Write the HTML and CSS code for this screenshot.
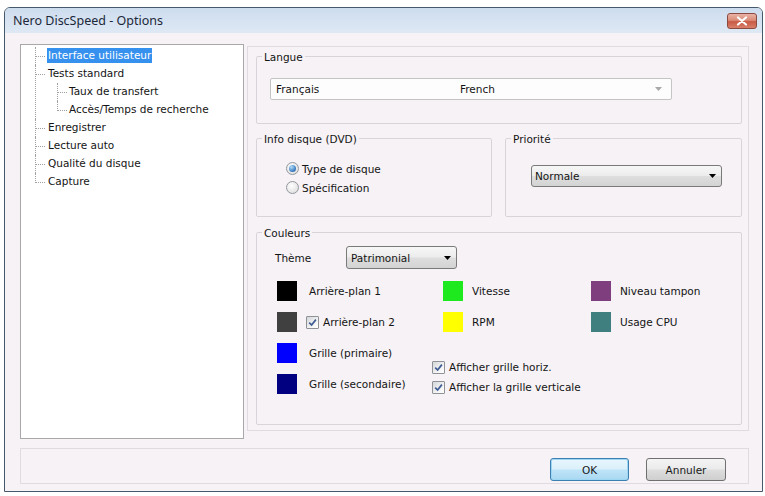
FILE: index.html
```html
<!DOCTYPE html>
<html lang="fr">
<head>
<meta charset="utf-8">
<title>Nero DiscSpeed - Options</title>
<link rel="stylesheet" href="styles.css">
</head>
<body>
<div class="window">
  <div class="titlebar">
    <span class="title">Nero DiscSpeed - Options</span>
    <span class="close"><svg width="12" height="10" viewBox="0 0 12 10"><path d="M2 1.5L10 8.5M10 1.5L2 8.5" stroke="#fff" stroke-width="2.2" stroke-linecap="round"/></svg></span>
  </div>
  <div class="content">
    <div class="main">
      <div class="tree">
        <ul class="tree-root">
          <li><span class="sel">Interface utilisateur</span></li>
          <li><span>Tests standard</span>
            <ul class="tree-sub">
              <li><span>Taux de transfert</span></li>
              <li><span>Accès/Temps de recherche</span></li>
            </ul>
          </li>
          <li><span>Enregistrer</span></li>
          <li><span>Lecture auto</span></li>
          <li><span>Qualité du disque</span></li>
          <li><span>Capture</span></li>
        </ul>
      </div>
      <div class="panel">
        <fieldset class="group lang">
          <legend>Langue</legend>
          <div class="combo-edit">
            <span class="lang-name">Français</span>
            <span>French</span>
            <svg class="arrow-grey" width="7" height="4" viewBox="0 0 7 4"><path d="M0 0h7L3.5 4z" fill="#a8a8a8"/></svg>
          </div>
        </fieldset>
        <div class="row">
          <fieldset class="group info">
            <legend>Info disque (DVD)</legend>
            <div class="opt"><span class="radio on"><span class="dot"></span></span><span>Type de disque</span></div>
            <div class="opt"><span class="radio"></span><span>Spécification</span></div>
          </fieldset>
          <fieldset class="group prio">
            <legend>Priorité</legend>
            <div class="dd dd-prio"><span>Normale</span><svg width="7" height="4" viewBox="0 0 7 4"><path d="M0 0h7L3.5 4z" fill="#000"/></svg></div>
          </fieldset>
        </div>
        <fieldset class="group colors">
          <legend>Couleurs</legend>
          <div class="theme-row">
            <span class="theme-label">Thème</span>
            <div class="dd dd-theme"><span>Patrimonial</span><svg width="7" height="4" viewBox="0 0 7 4"><path d="M0 0h7L3.5 4z" fill="#000"/></svg></div>
          </div>
          <div class="swatches">
            <div class="col col1">
              <div class="item"><span class="sw" style="background:#000000"></span><span class="lbl">Arrière-plan 1</span></div>
              <div class="item"><span class="sw" style="background:#404040"></span><span class="cb cb-inline"><svg width="9" height="9" viewBox="0 0 9 9"><path d="M1.2 4.6L3.6 7L7.9 1.6" stroke="#3f5c94" stroke-width="1.7" fill="none"/></svg></span><span class="lbl-cb">Arrière-plan 2</span></div>
              <div class="item"><span class="sw" style="background:#0000ff"></span><span class="lbl">Grille (primaire)</span></div>
              <div class="item"><span class="sw" style="background:#000080"></span><span class="lbl">Grille (secondaire)</span></div>
            </div>
            <div class="col col2">
              <div class="item"><span class="sw" style="background:#1ee81e"></span><span class="lbl2">Vitesse</span></div>
              <div class="item"><span class="sw" style="background:#ffff00"></span><span class="lbl2">RPM</span></div>
              <div class="checks">
                <div class="check"><span class="cb"><svg width="9" height="9" viewBox="0 0 9 9"><path d="M1.2 4.6L3.6 7L7.9 1.6" stroke="#3f5c94" stroke-width="1.7" fill="none"/></svg></span><span>Afficher grille horiz.</span></div>
                <div class="check"><span class="cb"><svg width="9" height="9" viewBox="0 0 9 9"><path d="M1.2 4.6L3.6 7L7.9 1.6" stroke="#3f5c94" stroke-width="1.7" fill="none"/></svg></span><span>Afficher la grille verticale</span></div>
              </div>
            </div>
            <div class="col col3">
              <div class="item"><span class="sw" style="background:#7f3f7f"></span><span class="lbl2">Niveau tampon</span></div>
              <div class="item"><span class="sw" style="background:#3f7f7f"></span><span class="lbl2">Usage CPU</span></div>
            </div>
          </div>
        </fieldset>
      </div>
    </div>
    <div class="bottom">
      <button class="btn btn-ok">OK</button>
      <button class="btn">Annuler</button>
    </div>
  </div>
</div>
</body>
</html>
```
FILE: styles.css
```css
* { box-sizing: border-box; }
body {
  margin: 0;
  background: #ffffff;
  font-family: "DejaVu Sans", sans-serif;
  font-size: 10.5px;
  color: #141414;
}
.window {
  margin: 7px 0 0 4px;
  width: 759px;
  height: 485px;
  border: 1px solid #46596b;
  border-radius: 6px 6px 0 0;
  background: #f6f2f6;
  display: flex;
  flex-direction: column;
  overflow: hidden;
}
.titlebar {
  height: 25px;
  flex: none;
  display: flex;
  align-items: center;
  padding-left: 8px;
  background: linear-gradient(#cddcee, #dfe9f5);
}
.title {
  font-family: "Noto Sans", sans-serif;
  font-size: 12.5px;
  color: #1c2838;
}
.close {
  margin-left: auto;
  margin-right: 5px;
  margin-top: 1px;
  width: 30px;
  height: 16px;
  border: 1px solid #8a4a40;
  border-radius: 3px;
  background: linear-gradient(#e9b3a6 0%, #db8b78 45%, #c85a45 55%, #d9806a 100%);
  display: flex;
  align-items: center;
  justify-content: center;
}
.content {
  flex: 1;
  padding: 11px 13px 7px 15px;
  display: flex;
  flex-direction: column;
}
.main {
  display: flex;
  align-items: flex-start;
  height: 395px;
  flex: none;
}
.tree {
  width: 224px;
  height: 395px;
  background: #ffffff;
  border: 1px solid #a9a9a9;
  padding: 2px 0 0 14px;
}
.tree ul { list-style: none; margin: 0; }
.tree-root { padding: 0; }
.tree-sub { padding: 0 0 0 10px; }
.tree li { display: flow-root; position: relative; padding-left: 12px; }
.tree-sub li { padding-left: 11px; }
.tree li::before {
  content: "";
  position: absolute;
  left: 0;
  top: 0;
  width: 9px;
  height: 9px;
  border-left: 1px dotted #a0a0a0;
  border-bottom: 1px dotted #a0a0a0;
}
.tree li:not(:last-child)::after {
  content: "";
  position: absolute;
  left: 0;
  top: 9px;
  bottom: 0;
  border-left: 1px dotted #a0a0a0;
}
.tree li > span {
  display: block;
  width: max-content;
  line-height: 15px;
  margin: 1px 0 2px;
  padding: 0 1px;
}
.tree .sel { background: #3690ee; color: #ffffff; }

.panel {
  margin-left: 3px;
  margin-top: 2px;
  width: 502px;
  height: 385px;
  border: 1px solid #e0dbe0;
  padding: 1px 6px 5px 8px;
  display: flex;
  flex-direction: column;
}
.group {
  border: 1px solid #d9d4d9;
  border-radius: 2px;
  margin: 0;
  padding: 0;
  min-width: 0;
}
.group legend {
  padding: 3px 2px 0;
  margin-left: 5px;
  line-height: 13px;
}
.lang { padding: 14px 0 23px 0; flex: none; }
.combo-edit {
  margin-left: 13px;
  width: 402px;
  height: 22px;
  border: 1px solid #c4c4c4;
  border-radius: 2px;
  background: #fdfdfd;
  display: flex;
  align-items: center;
  padding-left: 5px;
}
.lang-name { width: 184px; }
.arrow-grey { margin-left: auto; margin-right: 9px; }
.row {
  display: flex;
  gap: 13px;
  margin-top: 6px;
  flex: none;
}
.info { width: 236px; padding: 13px 0 19px 0; }
.prio { width: 237px; padding: 19px 0 0 0; }
.opt {
  margin-left: 29px;
  height: 19px;
  display: flex;
  align-items: center;
  gap: 3px;
}
.radio {
  width: 13px;
  height: 13px;
  border-radius: 50%;
  border: 1px solid #92989e;
  background: radial-gradient(circle at 40% 35%, #ffffff 0%, #e4e4e4 70%, #cfcfcf 100%);
  display: flex;
  align-items: center;
  justify-content: center;
}
.dot {
  width: 7px;
  height: 7px;
  border-radius: 50%;
  background: radial-gradient(circle at 35% 30%, #b7dcf7 0%, #4b8ccc 55%, #1f4f8c 100%);
}
.dd {
  height: 22px;
  border: 1px solid #7a7a7a;
  border-radius: 3px;
  background: linear-gradient(#f7f7f7 0%, #ececec 48%, #dedede 52%, #d3d3d3 100%);
  display: flex;
  align-items: center;
  justify-content: space-between;
  padding: 0 5px 0 3px;
}
.dd-prio { width: 191px; margin-left: 25px; }
.dd-theme { width: 111px; height: 23px; padding-left: 4px; }

.colors {
  flex: 1;
  margin-top: 7px;
  padding: 6px 0 0 0;
}
.theme-row {
  display: flex;
  align-items: center;
  padding-left: 18px;
}
.theme-label { width: 71px; }
.swatches {
  display: flex;
  margin-top: 12px;
  padding-left: 20px;
}
.col {
  display: flex;
  flex-direction: column;
  gap: 11px;
}
.col1 { width: 166px; }
.col2 { width: 148px; }
.item {
  height: 20px;
  display: flex;
  align-items: center;
}
.sw { width: 20px; height: 20px; flex: none; }
.lbl { margin-left: 12px; }
.lbl2 { margin-left: 9px; }
.lbl-cb { margin-left: 4px; }
.cb {
  width: 13px;
  height: 13px;
  flex: none;
  border: 1px solid #8e9196;
  border-radius: 1px;
  background: linear-gradient(135deg, #d4d6d9 0%, #f3f3f3 60%, #ffffff 100%);
  display: flex;
  align-items: center;
  justify-content: center;
}
.cb-inline { margin-left: 9px; }
.checks {
  margin-top: 14px;
  margin-left: -11px;
  display: flex;
  flex-direction: column;
}
.check {
  height: 20px;
  display: flex;
  align-items: center;
  gap: 4px;
  white-space: nowrap;
}
.bottom {
  margin-top: 9px;
  height: 36px;
  flex: none;
  border: 1px solid #e0dbe0;
  display: flex;
  justify-content: flex-end;
  align-items: flex-start;
  padding: 9px 22px 0 0;
  gap: 17px;
}
.btn {
  width: 80px;
  height: 23px;
  border: 1px solid #707070;
  border-radius: 3px;
  background: linear-gradient(#f4f4f4 0%, #ebebeb 48%, #dddddd 52%, #cfcfcf 100%);
  font-family: "DejaVu Sans", sans-serif;
  font-size: 10.5px;
  color: #1a1a1a;
  padding: 0;
}
.btn-ok {
  width: 79px;
  border-color: #3c7fb1;
  background: linear-gradient(#e8f5fc 0%, #dbf0fb 48%, #bfe4f8 52%, #a9d8f2 100%);
  box-shadow: inset 0 0 0 1px #9fd6f4;
}
```
